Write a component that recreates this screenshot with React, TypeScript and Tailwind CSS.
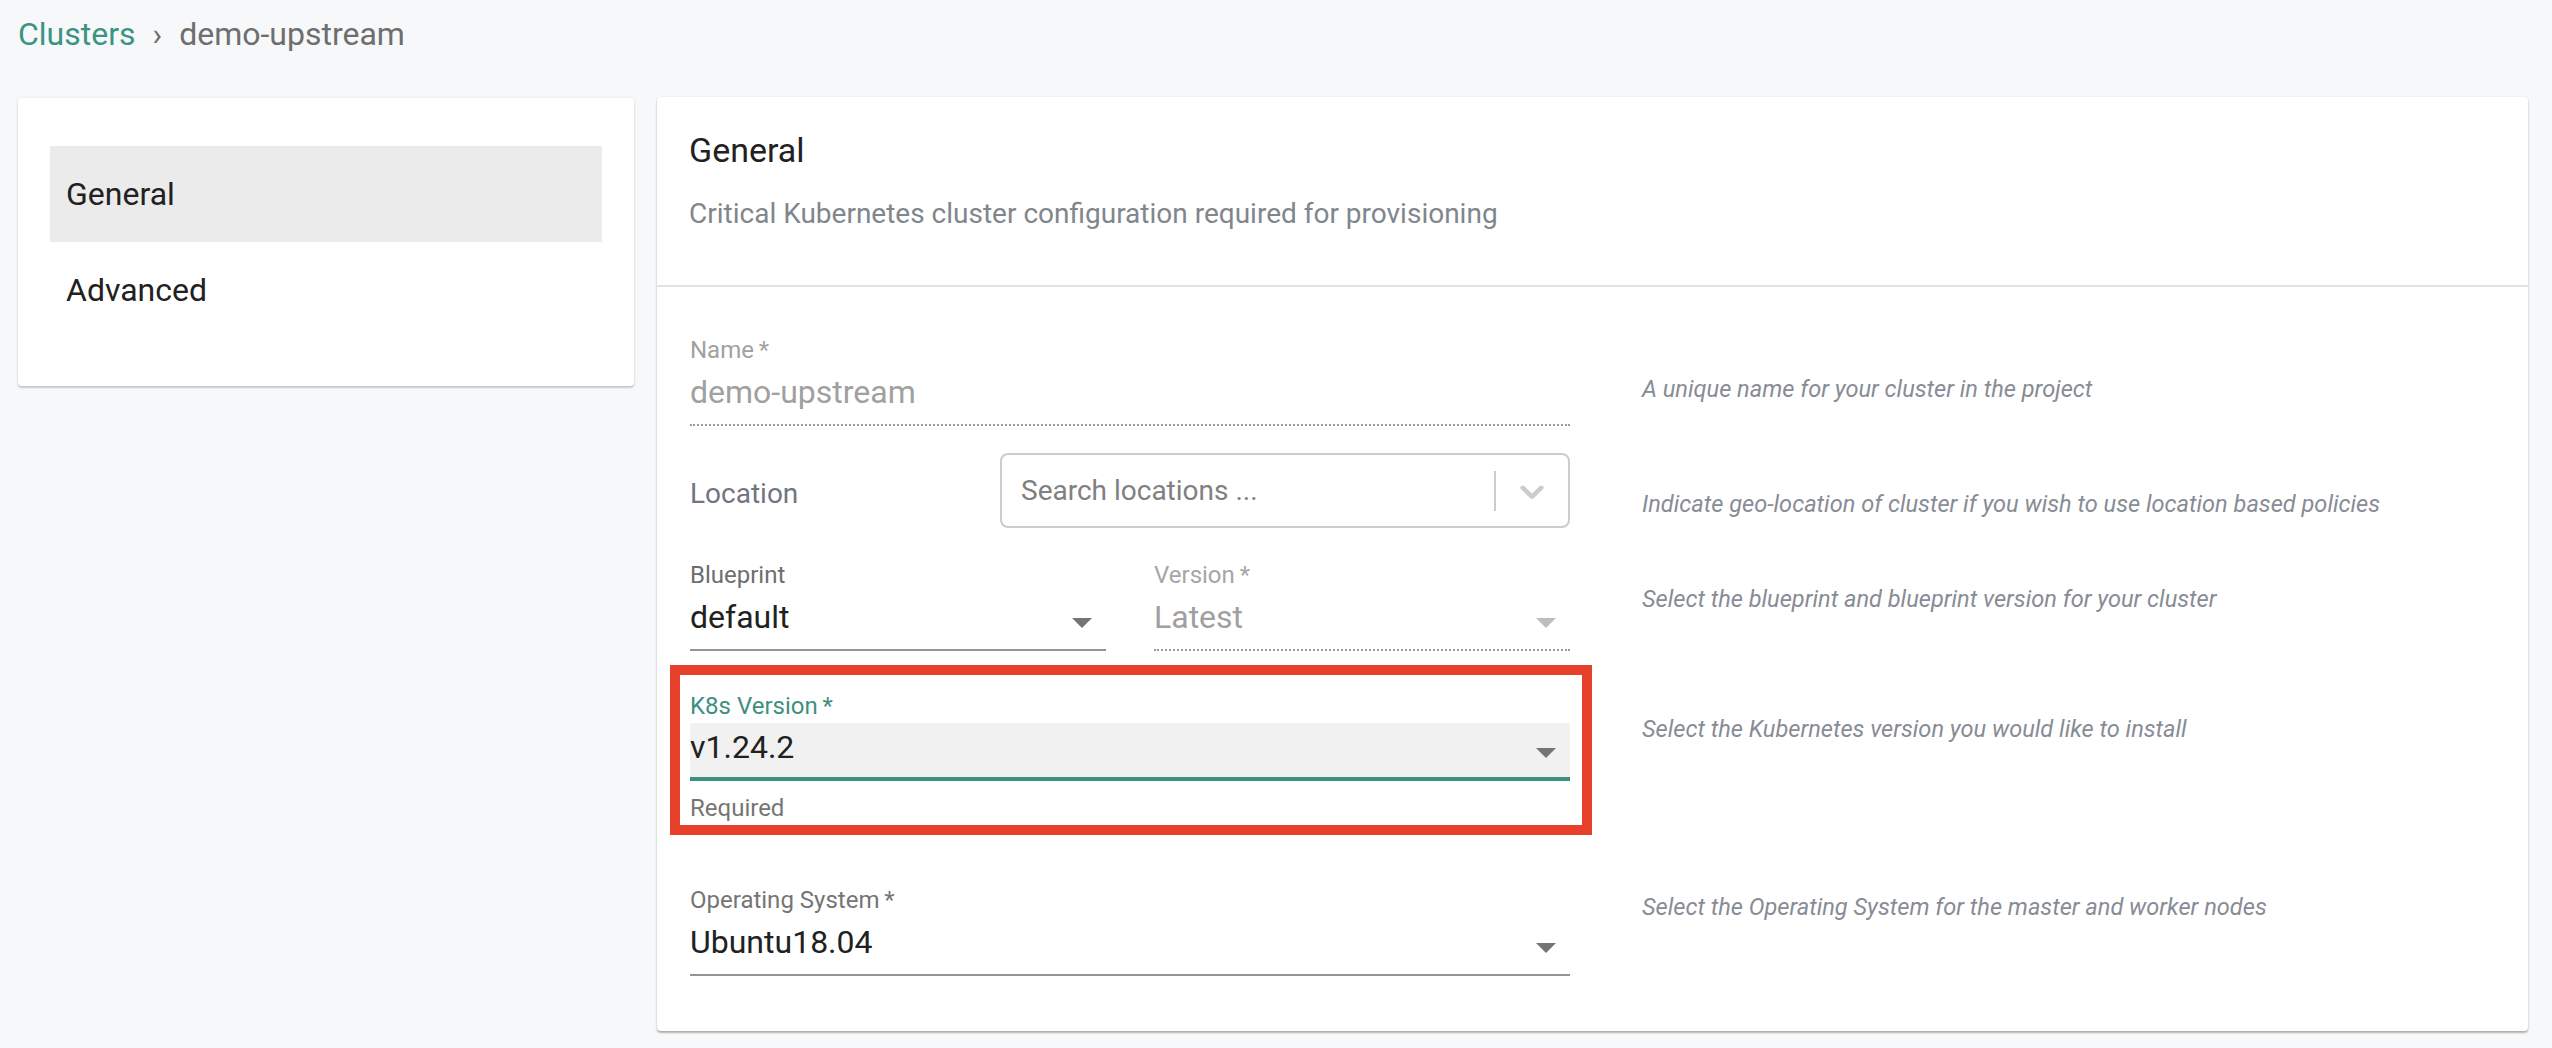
import React from "react";

function ArrowDrop({ color }: { color: string }) {
  return (
    <svg
      viewBox="0 0 24 24"
      width={48}
      height={48}
      className="absolute right-0 top-[1px]"
      fill={color}
    >
      <path d="M7 10l5 5 5-5z" />
    </svg>
  );
}

function Chevron() {
  return (
    <svg viewBox="0 0 20 20" width={40} height={40} fill="#cccccc">
      <path d="M4.516 7.548c0.436-0.446 1.043-0.481 1.576 0l3.908 3.747 3.908-3.747c0.533-0.481 1.141-0.446 1.574 0 0.436 0.445 0.408 1.197 0 1.615-0.406 0.418-4.695 4.502-4.695 4.502-0.217 0.223-0.502 0.335-0.787 0.335s-0.57-0.112-0.789-0.335c0 0-4.287-4.084-4.695-4.502s-0.436-1.17 0-1.615z" />
    </svg>
  );
}

const desc = "ml-[72px] text-[23.6px] leading-[28px] italic text-[#878c95] whitespace-nowrap";

export default function App() {
  return (
    <div className="min-h-[1048px] w-full bg-[#f7f8fa] font-['Roboto',sans-serif] pl-[18px] pr-[24px] pt-[14px]">
      {/* Breadcrumb */}
      <div className="flex items-center h-[40px] text-[32px] leading-[40px]">
        <span className="text-[#3a9483]">Clusters</span>
        <span className="mx-[17px] text-[#6e6e6e]">›</span>
        <span className="text-[#6e6e6e]">demo-upstream</span>
      </div>

      <div className="mt-[43px] flex items-start gap-[23px]">
        {/* Left nav card */}
        <div className="mt-px w-[616px] shrink-0 rounded-[4px] bg-white px-[32px] py-[48px] shadow-[0_2px_2px_0_rgba(0,0,0,0.18),0_0_3px_0_rgba(0,0,0,0.08)]">
          <div className="flex h-[96px] items-center bg-[#ebebeb] pl-[16px] text-[32px] text-[#212121]">
            General
          </div>
          <div className="flex h-[96px] items-center pl-[16px] text-[32px] text-[#212121]">
            Advanced
          </div>
        </div>

        {/* Right main card */}
        <div className="flex-1 rounded-[4px] bg-white shadow-[0_2px_2px_0_rgba(0,0,0,0.28),0_0_3px_0_rgba(0,0,0,0.08)]">
          <div className="px-[32px] pt-[33px] pb-[53px]">
            <div className="text-[34px] leading-[40px] text-[#212121]">General</div>
            <div className="mt-[26px] text-[28px] leading-[36px] text-[#80868b]">
              Critical Kubernetes cluster configuration required for provisioning
            </div>
          </div>
          <div className="h-[2px] bg-[#e3e3e3]" />

          <div className="px-[33px] pt-[49px] pb-[55px]">
            {/* Name */}
            <div className="flex items-start">
              <div className="w-[880px] shrink-0">
                <div className="text-[24px] leading-[28px] text-[#a1a1a1]">Name{"\u2009"}*</div>
                <div className="mt-[8px] border-b-2 border-dotted border-[#9a9a9a] pb-[12px] text-[32px] leading-[40px] text-[#a0a0a0]">
                  demo-upstream
                </div>
              </div>
              <div className={`${desc} mt-[39px]`}>A unique name for your cluster in the project</div>
            </div>

            {/* Location */}
            <div className="mt-[27px] flex items-start">
              <div className="flex w-[880px] shrink-0 items-center">
                <div className="mt-[6px] w-[310px] text-[28px] leading-[36px] text-[#6f7680]">Location</div>
                <div className="flex h-[75px] w-[570px] items-center rounded-[8px] border-2 border-[#cccccc]">
                  <div className="flex-1 pl-[19px] text-[28px] leading-[36px] text-[#808080]">
                    Search locations ...
                  </div>
                  <div className="h-[40px] w-[2px] bg-[#cccccc]" />
                  <div className="px-[16px]">
                    <Chevron />
                  </div>
                </div>
              </div>
              <div className={`${desc} mt-[37px]`}>
                Indicate geo-location of cluster if you wish to use location based policies
              </div>
            </div>

            {/* Blueprint / Version */}
            <div className="mt-[33px] flex items-start">
              <div className="flex w-[880px] shrink-0 gap-[48px]">
                <div className="w-[416px]">
                  <div className="text-[24px] leading-[28px] text-[#6e6e6e]">Blueprint</div>
                  <div className="relative mt-[8px] border-b-2 border-[#949494] pb-[12px] text-[32px] leading-[40px] text-[#212121]">
                    default
                    <ArrowDrop color="#757575" />
                  </div>
                </div>
                <div className="w-[416px]">
                  <div className="text-[24px] leading-[28px] text-[#a6a6a6]">Version{"\u2009"}*</div>
                  <div className="relative mt-[8px] border-b-2 border-dotted border-[#9a9a9a] pb-[12px] text-[32px] leading-[40px] text-[#a0a0a0]">
                    Latest
                    <ArrowDrop color="#bdbdbd" />
                  </div>
                </div>
              </div>
              <div className={`${desc} mt-[24px]`}>
                Select the blueprint and blueprint version for your cluster
              </div>
            </div>

            {/* K8s Version (highlighted) */}
            <div className="mt-[14px] flex items-start">
              <div className="w-[880px] shrink-0">
                <div className="-ml-[20px] w-[922px] border-[10px] border-[#e8412b] pl-[10px] pr-[12px] pt-[17px] pb-[3px]">
                  <div className="text-[24px] leading-[28px] text-[#3d8f80]">K8s Version{"\u2009"}*</div>
                  <div className="relative mt-[3px] bg-[#f1f1f1] pt-[4px] pb-[10px] text-[32px] leading-[40px] text-[#212121]">
                    <div className="relative">
                      v1.24.2
                      <ArrowDrop color="#757575" />
                    </div>
                  </div>
                  <div className="h-[4px] bg-[#3d8f80]" />
                  <div className="mt-[13px] text-[24px] leading-[28px] text-[#757575]">Required</div>
                </div>
              </div>
              <div className={`${desc} mt-[50px]`}>
                Select the Kubernetes version you would like to install
              </div>
            </div>

            {/* Operating System */}
            <div className="mt-[51px] flex items-start">
              <div className="w-[880px] shrink-0">
                <div className="text-[24px] leading-[28px] text-[#757575]">Operating System{"\u2009"}*</div>
                <div className="relative mt-[8px] border-b-2 border-[#949494] pb-[12px] text-[32px] leading-[40px] text-[#212121]">
                  Ubuntu18.04
                  <ArrowDrop color="#757575" />
                </div>
              </div>
              <div className={`${desc} mt-[7px]`}>
                Select the Operating System for the master and worker nodes
              </div>
            </div>
          </div>
        </div>
      </div>
    </div>
  );
}
